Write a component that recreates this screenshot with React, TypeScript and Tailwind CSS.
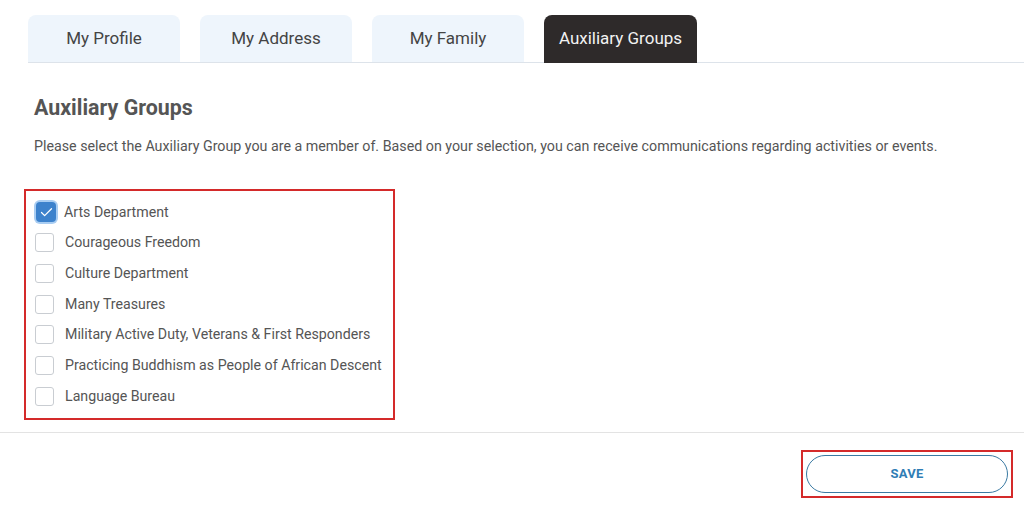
import { Check } from "lucide-react";

const tabs = ["My Profile", "My Address", "My Family", "Auxiliary Groups"];

const groups = [
  { name: "Arts Department", checked: true },
  { name: "Courageous Freedom", checked: false },
  { name: "Culture Department", checked: false },
  { name: "Many Treasures", checked: false },
  { name: "Military Active Duty, Veterans & First Responders", checked: false },
  { name: "Practicing Buddhism as People of African Descent", checked: false },
  { name: "Language Bureau", checked: false },
];

export default function App() {
  return (
    <div
      className="w-[1024px] h-[505px] bg-white text-[#555] overflow-hidden"
      style={{ fontFamily: "Roboto, 'Liberation Sans', sans-serif" }}
    >
      {/* Tabs */}
      <div className="pt-[15px] pl-[28px]">
        <div className="flex gap-[20px] border-b border-[#dde3ea]">
          {tabs.map((tab) => {
            const active = tab === "Auxiliary Groups";
            return (
              <div
                key={tab}
                className={
                  active
                    ? "w-[153px] h-[48px] -mb-px rounded-t-[8px] bg-[#2e2a2a] text-[#f2f2f2] flex items-center justify-center text-[17px]"
                    : "w-[152px] h-[47px] rounded-t-[8px] bg-[#eef5fc] text-[#444] flex items-center justify-center text-[17px]"
                }
              >
                {tab}
              </div>
            );
          })}
        </div>
      </div>

      {/* Content */}
      <div className="h-[370px] pl-[34px] pt-[32px] border-b border-[#e3e3e3]">
        <h2 className="text-[21.4px] font-bold text-[#555] leading-[26px]">
          Auxiliary Groups
        </h2>
        <p className="mt-[13px] text-[14.25px] leading-[24px] text-[#555]">
          Please select the Auxiliary Group you are a member of. Based on your selection, you can receive communications regarding activities or events.
        </p>
        <div className="mt-[31px] -ml-[10px] w-[371px] border-2 border-[#d42a2a] py-[6px] pl-[9px]">
          {groups.map((g) => (
            <div key={g.name} className="flex items-center h-[30.67px]">
              {g.checked ? (
                <div className="w-[20px] h-[20px] ml-[1px] mr-[8px] rounded-[4px] bg-[#3d82cc] ring-2 ring-[#a9cdf2] flex items-center justify-center">
                  <Check className="w-[15px] h-[15px] text-white" strokeWidth={2} />
                </div>
              ) : (
                <div className="w-[19px] h-[19px] mr-[11px] rounded-[3px] border border-[#c9cdd2] bg-white" />
              )}
              <span className="text-[14.2px] text-[#555]">{g.name}</span>
            </div>
          ))}
        </div>
      </div>

      {/* Footer */}
      <div className="bg-white h-[72px] flex justify-end pt-[17px] pr-[11px]">
        <div className="border-2 border-[#d42a2a] p-[3px] h-[48px]">
          <button className="w-[202px] h-[38px] rounded-full border border-[#3a7aa3] bg-white text-[#2f7db5] text-[13px] font-bold tracking-[0.3px]">
            SAVE
          </button>
        </div>
      </div>
    </div>
  );
}
